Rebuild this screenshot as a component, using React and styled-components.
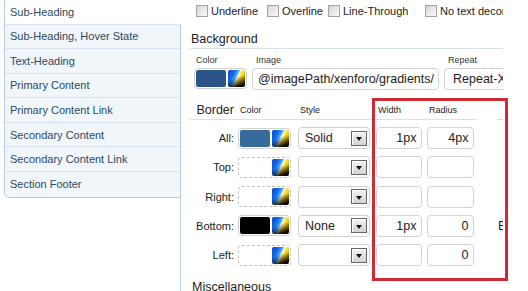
import React from 'react';
import styled, { createGlobalStyle } from 'styled-components';

const Global = createGlobalStyle`
  html, body { margin: 0; padding: 0; background: #fff; }
  body { font-family: "Liberation Sans", Arial, sans-serif; overflow: hidden; }
  * { box-sizing: border-box; }
`;

const Page = styled.div`
  position: relative;
  display: flex;
  width: 528px;
  height: 291px;
  overflow: hidden;
  background: #fff;
`;

const Sidebar = styled.ul`
  list-style: none;
  margin: 0 0 0 4px;
  padding: 0;
  width: 176px;
  flex-shrink: 0;
  align-self: flex-start;
  border-left: 1px solid #b7cddf;
  border-bottom: 1px solid #b7cddf;
  border-bottom-left-radius: 5px;
  position: relative;
  z-index: 1;
`;

const Item = styled.li`
  height: 24.57px;
  display: flex;
  align-items: center;
  padding-left: 5px;
  font-size: 11px;
  color: #2a4a64;
  white-space: nowrap;
  background: ${p => (p.$active ? '#ffffff' : '#f1f6fa')};
  border-bottom: 1px solid #d6e3ee;
  margin-right: ${p => (p.$active ? '-1px' : '0')};
  &:last-child {
    border-bottom: none;
    border-bottom-left-radius: 4px;
  }
`;

const Pane = styled.div`
  width: 323px;
  height: 291px;
  flex-shrink: 0;
  border-left: 1px solid #b7cddf;
  overflow: hidden;
  color: #222;
`;

const CheckRow = styled.div`
  display: flex;
  align-items: center;
  height: 22px;
  padding-left: 15px;
  white-space: nowrap;
`;

const CheckItem = styled.label`
  display: flex;
  align-items: center;
  flex-shrink: 0;
  width: ${p => p.$w}px;
  font-size: 11px;
  color: #222;
`;

const Box = styled.input.attrs({ type: 'checkbox' })`
  appearance: none;
  width: 12px;
  height: 12px;
  margin: 0 3px 0 0;
  border: 1px solid #a3a3a3;
  background: linear-gradient(135deg, #d4d4d4 0%, #ececec 60%, #fafafa 100%);
`;

const SectionHead = styled.div`
  margin: 9px 0 0 9px;
  padding-left: 1px;
  width: 313px;
  height: 18px;
  line-height: 17px;
  font-size: 12.5px;
  color: #222;
  border-bottom: 1px solid #d4e2ed;
`;

const FieldRow = styled.div`
  display: flex;
  gap: 5px;
  margin: 6px 0 0 13px;
`;

const Field = styled.div`
  display: flex;
  flex-direction: column;
  gap: 2px;
  flex-shrink: 0;
`;

const SmallLabel = styled.div`
  font-size: 9px;
  line-height: 11px;
  color: #333;
  padding-left: ${p => p.$pad ?? 3}px;
`;

const Picker = styled.div`
  display: flex;
  align-items: center;
  gap: 2px;
  width: 53px;
  height: 21px;
  padding: 1px;
  border: 1px ${p => (p.$empty ? 'dashed #c4c4c4' : 'solid #d2d2d2')};
  border-radius: 4px;
  background: #fff;
`;

const Swatch = styled.div`
  width: 30px;
  height: 17px;
  border-radius: 2px;
  background: ${p => p.$color || 'transparent'};
`;

const GradientIcon = styled.div`
  width: 17px;
  height: 17px;
  border-radius: 2px;
  background:
    linear-gradient(160deg, rgba(0,0,0,0) 45%, rgba(0,0,0,0.9) 85%, #000 100%),
    linear-gradient(115deg, #0a44c4 0%, #1670e6 30%, #49aaff 44%, #f2f8ff 52%, #ffe640 60%, #e6be00 78%, #8a7000 100%);
`;

const TextInput = styled.div`
  width: ${p => p.$w}px;
  height: 22px;
  display: flex;
  align-items: center;
  justify-content: ${p => (p.$right ? 'flex-end' : 'flex-start')};
  padding: 0 ${p => (p.$right ? '4.5px' : '0')} 0 ${p => (p.$right ? '0' : '5px')};
  border: 1px solid #d3d3d3;
  border-radius: 4px;
  font-size: 12.5px;
  color: #222;
  white-space: nowrap;
  overflow: hidden;
  background: #fff;
`;

const Select = styled.div`
  width: ${p => p.$w}px;
  height: 22px;
  display: flex;
  align-items: center;
  padding: 0 2px 0 ${p => p.$pad ?? 6}px;
  border: 1px solid #d0d0d0;
  border-radius: 4px;
  font-size: 12.5px;
  color: #222;
  white-space: nowrap;
  background: #fff;
`;

const DropButton = styled.span`
  margin-left: auto;
  width: 16px;
  height: 15px;
  flex-shrink: 0;
  display: flex;
  align-items: center;
  justify-content: center;
  border: 1px solid #666;
  box-shadow: inset 1px 1px 0 #fff;
  background: linear-gradient(#f2f2f2, #d2d2d2);
  &::after {
    content: '';
    width: 0;
    height: 0;
    margin-top: 2px;
    border-left: 3.5px solid transparent;
    border-right: 3.5px solid transparent;
    border-top: 4px solid #111;
  }
`;

const cols = '47px 60px 78px 51px 51px 20px 40px';

const BorderHead = styled.div`
  display: grid;
  grid-template-columns: ${cols};
  margin: 11px 0 0 9px;
  height: 19px;
`;

const HeadCell = styled.div`
  display: flex;
  align-items: center;
  justify-content: ${p => (p.$right ? 'flex-end' : 'flex-start')};
  padding: ${p => (p.$right ? '0 3px 0 0' : '0 0 0 3px')};
  font-size: ${p => (p.$big ? '12.5px' : '9px')};
  color: #222;
  border-bottom: 1px solid ${p => (p.$noLine ? 'transparent' : '#d4e2ed')};
`;

const BorderRows = styled.div`
  margin-left: 9px;
  padding-top: 3.4px;
`;

const BorderRow = styled.div`
  display: grid;
  grid-template-columns: ${cols};
  height: 29.25px;
  align-items: center;
`;

const RowLabel = styled.div`
  text-align: right;
  padding-right: 3px;
  font-size: 11px;
  color: #222;
`;

const Cell = styled.div`
  padding-left: 1px;
  display: flex;
  align-items: center;
  font-size: 12.5px;
  color: #222;
  white-space: nowrap;
`;

const Misc = styled.div`
  margin: 9px 0 0 11px;
  font-size: 12.5px;
  line-height: 16px;
  color: #222;
`;

const Highlight = styled.div`
  position: absolute;
  left: 372px;
  top: 98px;
  width: 136px;
  height: 183px;
  border: 3px solid #d02a37;
  pointer-events: none;
`;

const navItems = [
  'Sub-Heading',
  'Sub-Heading, Hover State',
  'Text-Heading',
  'Primary Content',
  'Primary Content Link',
  'Secondary Content',
  'Secondary Content Link',
  'Section Footer',
];

const checks = [
  ['Underline', 71],
  ['Overline', 61],
  ['Line-Through', 97],
  ['No text decoration', 160],
];

const rows = [
  { label: 'All:', color: '#386a9b', style: 'Solid', width: '1px', radius: '4px' },
  { label: 'Top:' },
  { label: 'Right:' },
  { label: 'Bottom:', color: '#000', style: 'None', width: '1px', radius: '0', extra: 'B' },
  { label: 'Left:', radius: '0' },
];

export default function App() {
  return (
    <>
      <Global />
      <Page>
        <Sidebar>
          {navItems.map((t, i) => (
            <Item key={t} $active={i === 0}>{t}</Item>
          ))}
        </Sidebar>
        <Pane>
          <CheckRow>
            {checks.map(([t, w]) => (
              <CheckItem key={t} $w={w}>
                <Box />
                {t}
              </CheckItem>
            ))}
          </CheckRow>

          <SectionHead>Background</SectionHead>
          <FieldRow>
            <Field>
              <SmallLabel $pad={2}>Color</SmallLabel>
              <Picker>
                <Swatch $color="#2c5587" />
                <GradientIcon />
              </Picker>
            </Field>
            <Field>
              <SmallLabel $pad={4}>Image</SmallLabel>
              <TextInput $w={187}>@imagePath/xenforo/gradients/</TextInput>
            </Field>
            <Field>
              <SmallLabel $pad={4}>Repeat</SmallLabel>
              <Select $w={90} $pad={8}>Repeat-X</Select>
            </Field>
          </FieldRow>

          <BorderHead>
            <HeadCell $right $big>Border</HeadCell>
            <HeadCell>Color</HeadCell>
            <HeadCell>Style</HeadCell>
            <HeadCell>Width</HeadCell>
            <HeadCell>Radius</HeadCell>
            <HeadCell $noLine />
            <HeadCell />
          </BorderHead>
          <BorderRows>
            {rows.map(r => (
              <BorderRow key={r.label}>
                <RowLabel>{r.label}</RowLabel>
                <Cell>
                  <Picker $empty={!r.color}>
                    <Swatch $color={r.color} />
                    <GradientIcon />
                  </Picker>
                </Cell>
                <Cell>
                  <Select $w={72}>
                    {r.style}
                    <DropButton />
                  </Select>
                </Cell>
                <Cell>
                  <TextInput $w={46} $right>{r.width}</TextInput>
                </Cell>
                <Cell>
                  <TextInput $w={47} $right>{r.radius}</TextInput>
                </Cell>
                <Cell />
                <Cell>{r.extra}</Cell>
              </BorderRow>
            ))}
          </BorderRows>
          <Misc>Miscellaneous</Misc>
        </Pane>
        <Highlight />
      </Page>
    </>
  );
}
